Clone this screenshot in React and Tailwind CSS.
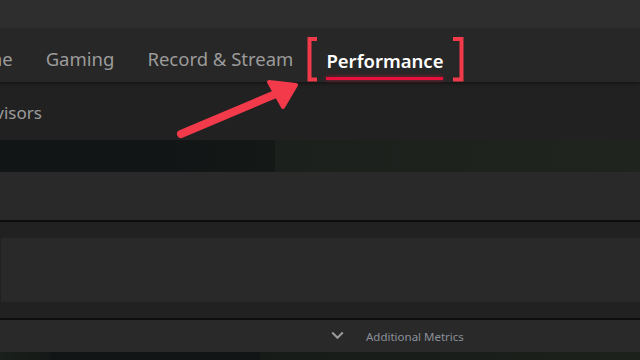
import React from 'react';

const tabs = ['Home', 'Gaming', 'Record & Stream'];

const App = () => {
  return (
    <div
      className="relative w-[640px] h-[360px] overflow-hidden bg-[#212121]"
      style={{ fontFamily: '"Noto Sans", "Open Sans", sans-serif' }}
    >
      {/* top strip */}
      <div className="h-[28px] bg-[#2e2e2e]" />

      {/* main tabs */}
      <div className="h-[54px] bg-[#272727] flex items-start pt-[22px] ml-[-40px] gap-[33px] shadow-[0_2px_3px_rgba(0,0,0,0.35)] relative z-10">
        {tabs.map((t) => (
          <span key={t} className="text-[18.5px] text-[#9b9b9b] leading-none">{t}</span>
        ))}
        <div className="relative">
          <span className="text-[18.5px] font-semibold text-white leading-none">Performance</span>
          <div className="absolute left-0 right-0 top-[27px] h-[3px] bg-[#e4113a] shadow-[0_0_4px_rgba(228,17,58,0.6)]" />
        </div>
      </div>

      {/* sub tabs */}
      <div className="h-[58px] bg-[#212121] flex items-center ml-[-26px]">
        <span className="text-[17px] text-[#9b9b9b] leading-none mt-[2px]">Advisors</span>
      </div>

      {/* dark band */}
      <div className="h-[32px] flex">
        <div className="w-[275px] bg-gradient-to-r from-[#121516] via-[#121516] to-[#141816]" />
        <div className="flex-1 bg-gradient-to-r from-[#1c201c] to-[#1f241f]" />
      </div>

      <div className="h-[48px] bg-[#292929]" />
      <div className="h-[2px] bg-[#0d0d0d]" />
      <div className="h-[16px] bg-[#212121]" />
      <div className="h-[64px] bg-[#212121] pl-[1px]">
        <div className="h-full bg-[#292929]" />
      </div>
      <div className="h-[16px] bg-[#212121]" />
      <div className="h-[2px] bg-[#0d0d0d]" />

      {/* additional metrics */}
      <div className="h-[32px] bg-[#292929] flex items-center pl-[331px]">
        <svg width="13" height="9" viewBox="0 0 13 9" className="mt-[-1px]">
          <path d="M1.2 1.5 L6.5 6.8 L11.8 1.5" fill="none" stroke="#9a9a9a" strokeWidth="2" />
        </svg>
        <span className="ml-[22px] text-[11.5px] text-[#8a909a] leading-none mt-[2px]">Additional Metrics</span>
      </div>

      {/* bottom band */}
      <div className="h-[8px] flex">
        <div className="w-[50px] bg-gradient-to-r from-[#1a201b] to-[#141816]" />
        <div className="w-[210px] bg-[#121516]" />
        <div className="flex-1 bg-gradient-to-r from-[#171b18] to-[#1c211c]" />
      </div>

      {/* annotation brackets and arrow */}
      <svg className="absolute left-0 top-0 z-20" width="640" height="360" viewBox="0 0 640 360">
        <path d="M317 39 L309.5 39 L309.5 79.5 L317 79.5" fill="none" stroke="#f23a4b" strokeWidth="4" />
        <path d="M453 39 L461.5 39 L461.5 79.5 L453 79.5" fill="none" stroke="#f23a4b" strokeWidth="4" />
        <line x1="181" y1="134" x2="278" y2="93" stroke="#f23a4b" strokeWidth="8" strokeLinecap="round" />
        <path d="M269 82 L296 85 L283 107 Z" fill="#f23a4b" stroke="#f23a4b" strokeWidth="4" strokeLinejoin="round" />
      </svg>
    </div>
  );
};

export default App;
